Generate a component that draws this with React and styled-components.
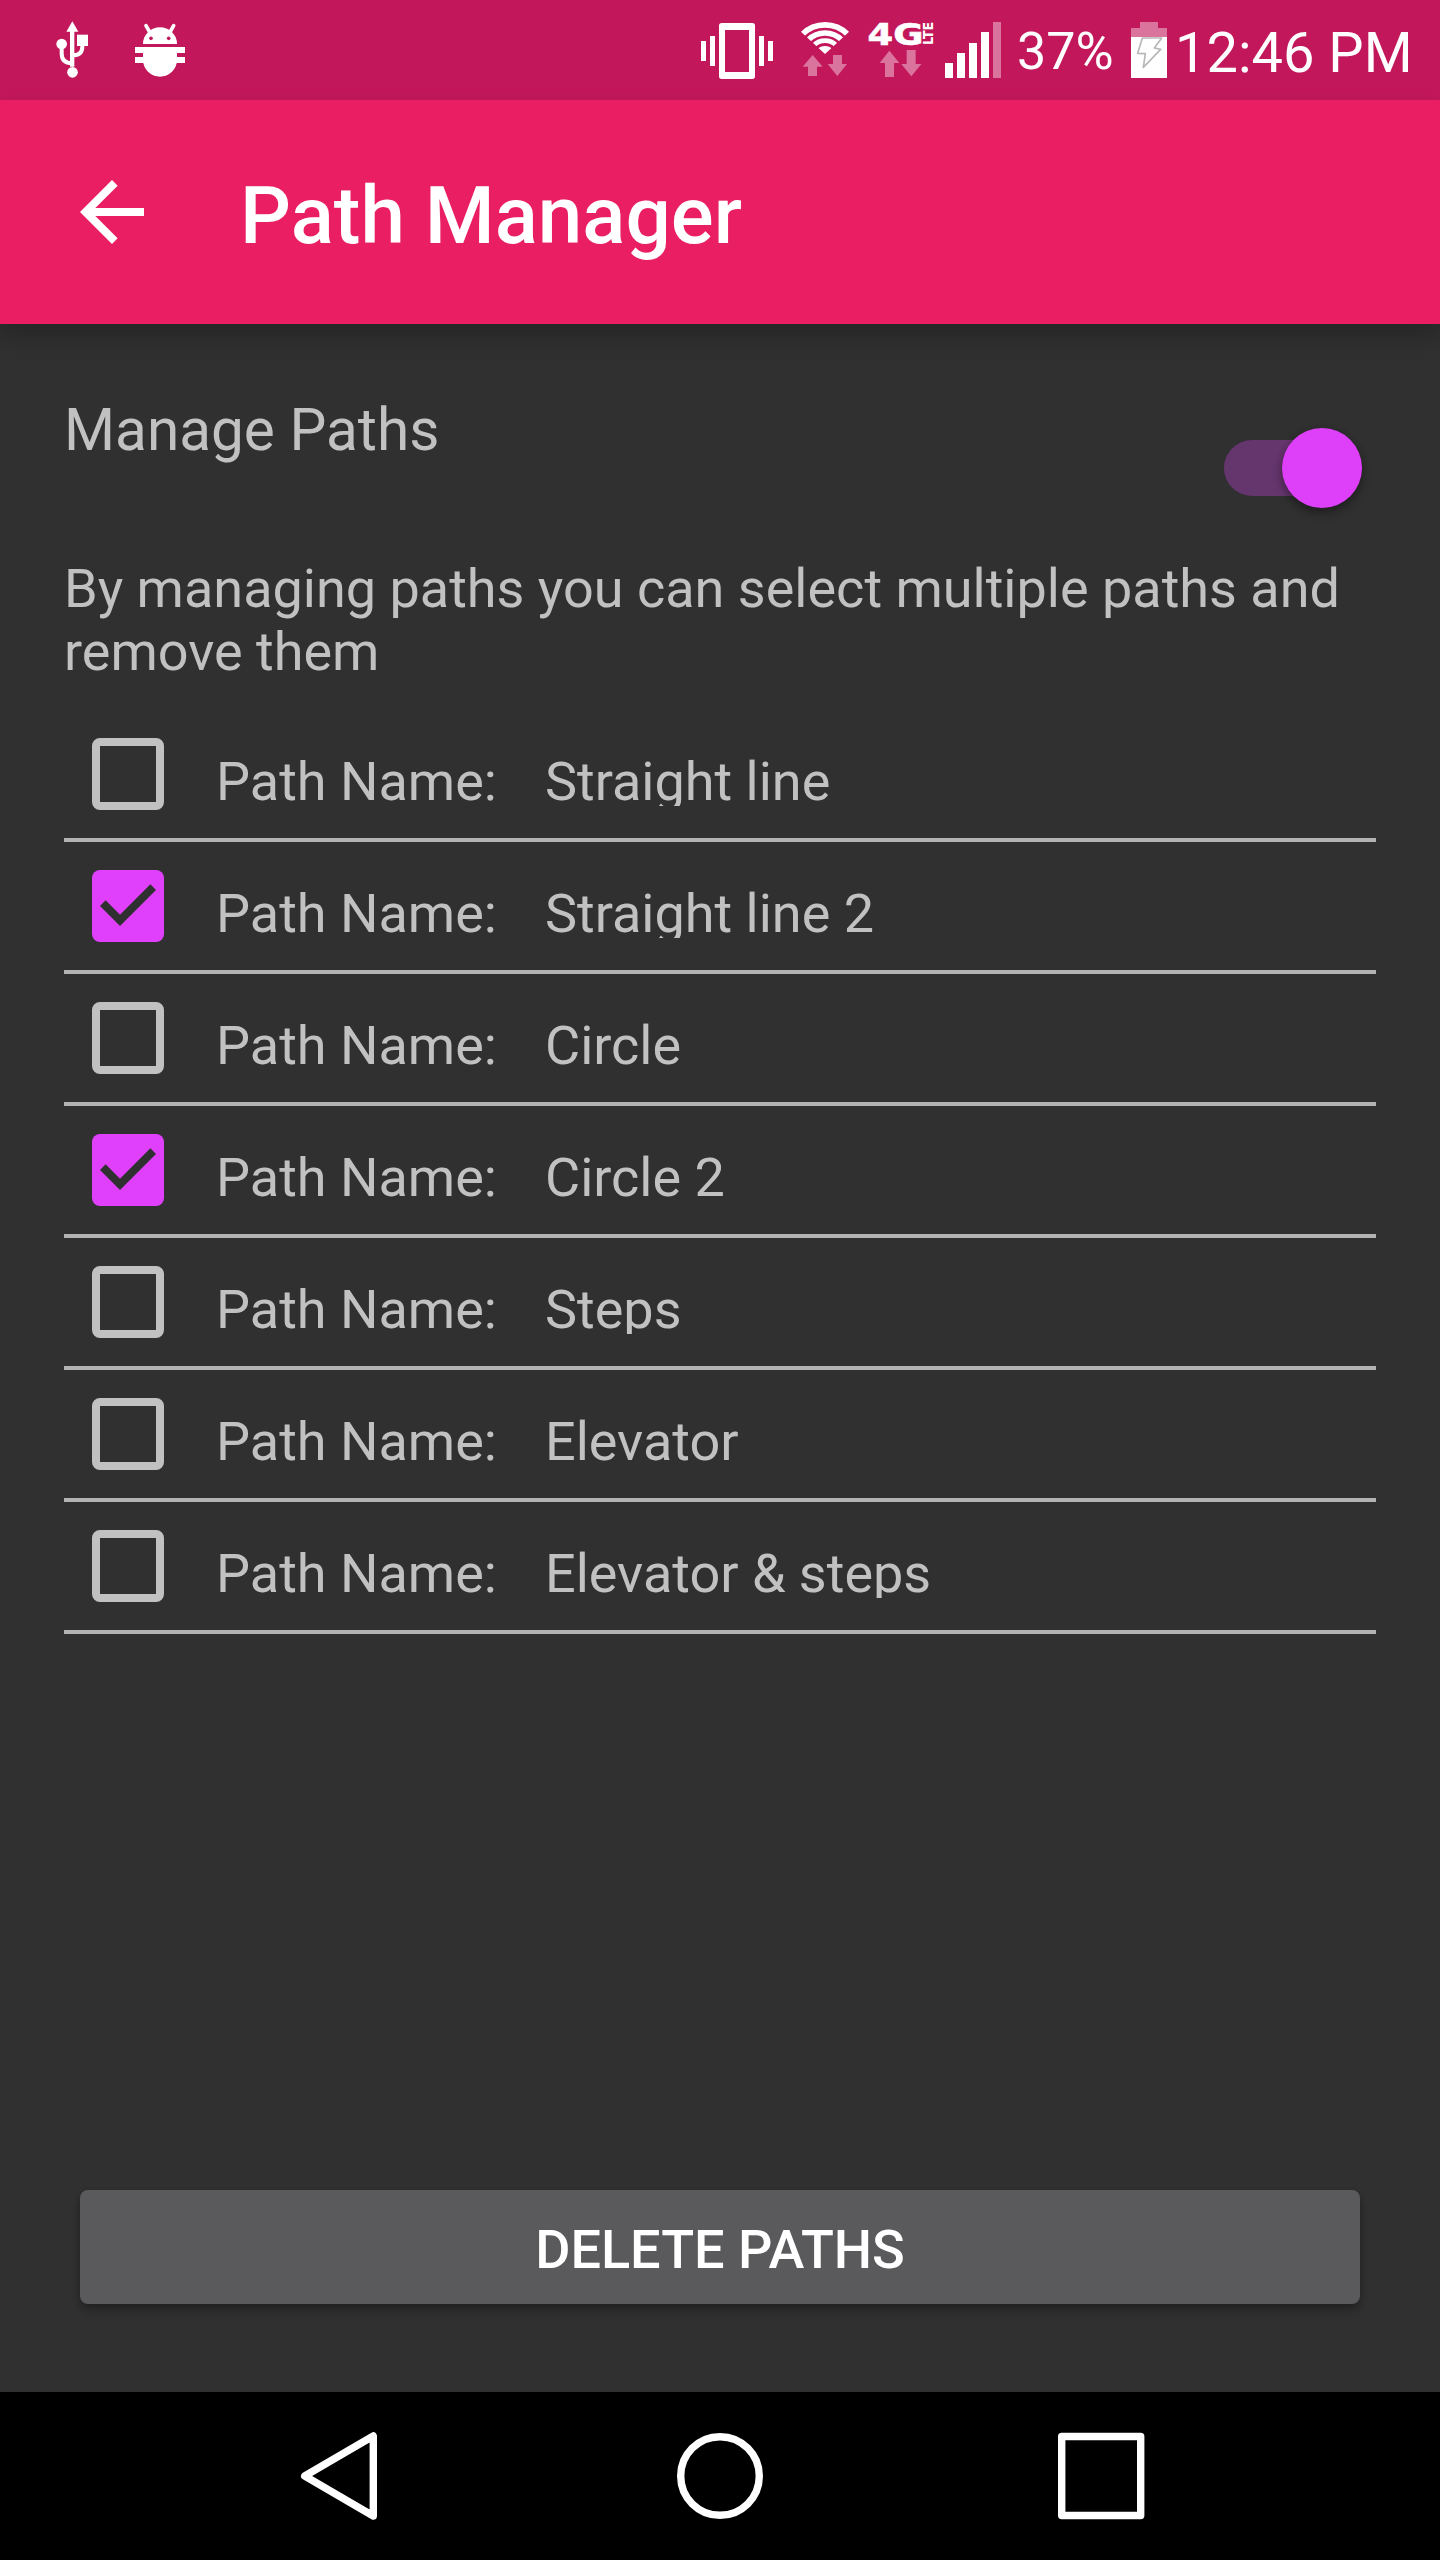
import React, { useState } from 'react';
import styled, { createGlobalStyle } from 'styled-components';

const GlobalStyle = createGlobalStyle`
  * { box-sizing: border-box; }
  body { margin: 0; background: #303030; font-family: Roboto, "Noto Sans", sans-serif; }
`;

const Screen = styled.div`
  display: flex;
  flex-direction: column;
  width: 1440px;
  height: 2560px;
  background: #303030;
  color: #c1c1c1;
  overflow: hidden;
`;

const StatusBar = styled.div`
  display: flex;
  align-items: flex-start;
  height: 100px;
  flex: none;
  background: #c2185b;
  color: #fff;
`;

const Icon = styled.svg`
  display: block;
  flex: none;
  width: ${(p) => p.$w}px;
  height: ${(p) => p.$h}px;
  margin-left: ${(p) => p.$ml || 0}px;
`;

const StatusText = styled.span`
  flex: none;
  white-space: nowrap;
  font-size: ${(p) => p.$size}px;
  line-height: 66px;
  width: ${(p) => p.$width}px;
  margin-left: ${(p) => p.$ml}px;
  padding-top: ${(p) => p.$top}px;
`;

const AppBar = styled.header`
  display: flex;
  align-items: center;
  flex: none;
  height: 224px;
  padding-left: 64px;
  background: #e91e63;
  color: #fff;
  z-index: 1;
  box-shadow: 0 12px 22px rgba(0, 0, 0, 0.22);
`;

const Title = styled.h1`
  margin: 0 0 0 80px;
  font-size: 80px;
  font-weight: 500;
  line-height: 94px;
  padding-top: 8px;
`;

const Content = styled.main`
  display: flex;
  flex-direction: column;
  flex: 1;
  padding: 64px 64px 0;
`;

const ManageRow = styled.div`
  display: flex;
  justify-content: space-between;
  height: 169px;
`;

const ManageLabel = styled.span`
  font-size: 58.5px;
  line-height: 70px;
  padding-top: 7px;
`;

const Track = styled.button`
  display: flex;
  justify-content: flex-end;
  align-items: center;
  width: 138px;
  height: 56px;
  margin: 52px 14px 0 0;
  padding: 0;
  border: 0;
  border-radius: 28px;
  background: #65356d;
`;

const Thumb = styled.span`
  flex: none;
  width: 80px;
  height: 80px;
  border-radius: 50%;
  background: #de3ff9;
  box-shadow: 0 6px 10px rgba(0, 0, 0, 0.3), 0 0 6px rgba(0, 0, 0, 0.15);
`;

const Description = styled.p`
  margin: 0;
  height: 153px;
  font-size: 54px;
  line-height: 63px;
  white-space: nowrap;
`;

const PathList = styled.ul`
  list-style: none;
  margin: 0;
  padding: 0;
`;

const PathRow = styled.li`
  display: flex;
  height: 132px;
  padding-left: 28px;
  border-bottom: 4px solid #b3b3b3;
`;

const Box = styled.button`
  flex: none;
  width: 72px;
  height: 72px;
  margin-top: 28px;
  padding: 0;
  border: ${(p) => (p.$checked ? '0' : '8px solid #c1c1c1')};
  border-radius: 8px;
  background: ${(p) => (p.$checked ? '#e040fb' : 'transparent')};
`;

const Label = styled.span`
  flex: none;
  width: 329px;
  margin: 38px 0 0 52px;
  font-size: 54px;
  line-height: 67px;
`;

const Name = styled.span`
  height: 58px;
  margin-top: 38px;
  font-size: 54px;
  line-height: 67px;
  overflow: hidden;
`;

const DeleteButton = styled.button`
  height: 114px;
  margin: auto 16px 88px;
  padding: 5px 0 0;
  border: 0;
  border-radius: 8px;
  background: #5a5a5c;
  color: #fff;
  font: 500 54px/67px Roboto, "Noto Sans", sans-serif;
  box-shadow: 0 8px 8px rgba(0, 0, 0, 0.16), 0 2px 6px rgba(0, 0, 0, 0.2);
`;

const NavBar = styled.nav`
  display: flex;
  align-items: center;
  flex: none;
  height: 168px;
  padding-left: 296px;
  background: #000;
`;

function UsbIcon() {
  return (
    <Icon $w={36} $h={100} $ml={54} viewBox="162 0 108 300" fill="#fff">
      <path d="M217 64l18 31h-12v105h-13V95h-11z" />
      <circle cx="185" cy="132" r="16" />
      <circle cx="217.500" cy="217" r="16" />
      <path d="M231 104h33v34h-33z" />
      <path d="M185 146v14q0 30 31 30M247 136v4q0 26-30 26" fill="none" stroke="#fff" strokeWidth="12" />
    </Icon>
  );
}

function DebugIcon() {
  return (
    <Icon $w={52} $h={100} $ml={44} viewBox="402 0 156 300" fill="#fff">
      <path d="M438 77l12 21M521 77l-12 21" stroke="#fff" strokeWidth="11" strokeLinecap="round" />
      <path d="M429 132a51 50 0 0 1 102 0z" />
      <circle cx="453" cy="115" r="5.500" fill="#c2185b" />
      <circle cx="506" cy="115" r="5.500" fill="#c2185b" />
      <path d="M405 141h150v18h-24v12h24v18h-25a51 51 0 0 1-100 0h-25v-18h24v-12h-24z" />
    </Icon>
  );
}

function VibrateIcon() {
  return (
    <Icon $w={76} $h={100} $ml={513} viewBox="57 0 228 300" fill="#fff">
      <path fillRule="evenodd" d="M125 69h92q8 0 8 8v152q0 8-8 8h-92q-8 0-8-8V77q0-8 8-8zM135 90v126h72V90z" />
      <path d="M63 123h15v60H63zM90 108h15v90H90zM237 108h15v90h-15zM264 123h15v60h-15z" />
    </Icon>
  );
}

function WifiIcon() {
  return (
    <Icon $w={52} $h={100} $ml={24} viewBox="357 0 156 300" fill="#fff">
      <clipPath id="fan">
        <path d="M435 162L354 87V60h162v27z" />
      </clipPath>
      <g clipPath="url(#fan)" fill="none" stroke="#fff">
        <circle cx="435" cy="170" r="95.500" strokeWidth="17" />
        <circle cx="435" cy="170" r="71" strokeWidth="16" />
        <circle cx="435" cy="170" r="48" strokeWidth="14" />
        <circle cx="435" cy="170" r="16" strokeWidth="32" />
      </g>
      <path
        opacity="0.4"
        d="M398 165l30 35h-17v28h-27v-28h-16zM459 165h27v27h15l-29 36-29-36h16z"
      />
    </Icon>
  );
}

function LteIcon() {
  return (
    <Icon $w={70} $h={100} $ml={16} viewBox="187 0 70 100" fill="#fff">
      <g fontFamily="DejaVu Sans" fontWeight="700">
        <text x="187.500" y="45.200" fontSize="30.500" textLength="56" lengthAdjust="spacingAndGlyphs" stroke="#fff" strokeWidth="0.600">4G</text>
        <text transform="translate(253 45) rotate(-90)" fontSize="13.500" textLength="23" lengthAdjust="spacingAndGlyphs">LTE</text>
      </g>
      <path
        opacity="0.4"
        transform="scale(.33333)"
        d="M628 152l30 37h-16v42h-27v-42h-16zM680 150h27v42h17l-30 37-30-37h16z"
      />
    </Icon>
  );
}

function SignalIcon() {
  return (
    <Icon $w={60} $h={100} $ml={6} viewBox="789 0 180 300" fill="#fff">
      <path d="M795 189h24v45h-24zM831 159h24v75h-24zM867 129h24v105h-24zM903 96h24v138h-24z" />
      <path opacity="0.4" d="M939 66h24v168h-24z" />
    </Icon>
  );
}

function BatteryIcon() {
  return (
    <Icon $w={36} $h={100} viewBox="393 0 108 300" fill="#fff">
      <path opacity="0.4" d="M420 66h54v18h27v27H393V84h27z" />
      <path d="M393 111h108v123H393z" />
      <path
        d="M427 114h58l-22 30 19 4-52 54 6-41-23-1z"
        fill="none"
        stroke="#b8b8b8"
        strokeWidth="5"
        strokeLinejoin="round"
      />
    </Icon>
  );
}

const initialPaths = [
  { name: 'Straight line', checked: false },
  { name: 'Straight line 2', checked: true },
  { name: 'Circle', checked: false },
  { name: 'Circle 2', checked: true },
  { name: 'Steps', checked: false },
  { name: 'Elevator', checked: false },
  { name: 'Elevator & steps', checked: false },
];

export default function App() {
  const [paths, setPaths] = useState(initialPaths);
  const toggle = (index) =>
    setPaths(paths.map((p, i) => (i === index ? { ...p, checked: !p.checked } : p)));

  return (
    <Screen>
      <GlobalStyle />
      <StatusBar>
        <UsbIcon />
        <DebugIcon />
        <VibrateIcon />
        <WifiIcon />
        <LteIcon />
        <SignalIcon />
        <StatusText $size={52} $width={114} $ml={14} $top={19}>37%</StatusText>
        <BatteryIcon />
        <StatusText $size={56} $width={240} $ml={8} $top={20}>12:46 PM</StatusText>
      </StatusBar>
      <AppBar>
        <Icon $w={96} $h={96} viewBox="0 0 24 24" fill="#fff">
          <path d="M20 11H7.830l5.590-5.590L12 4l-8 8 8 8 1.410-1.410L7.830 13H20v-2z" />
        </Icon>
        <Title>Path Manager</Title>
      </AppBar>
      <Content>
        <ManageRow>
          <ManageLabel>Manage Paths</ManageLabel>
          <Track role="switch" aria-checked="true">
            <Thumb />
          </Track>
        </ManageRow>
        <Description>
          By managing paths you can select multiple paths and
          <br />
          remove them
        </Description>
        <PathList>
          {paths.map((path, i) => (
            <PathRow key={path.name}>
              <Box $checked={path.checked} onClick={() => toggle(i)}>
                {path.checked && (
                  <Icon $w={72} $h={72} viewBox="3 3 18 18" fill="#303030">
                    <path d="M10 17l-5-5 1.410-1.410L10 14.170l7.590-7.590L19 8z" />
                  </Icon>
                )}
              </Box>
              <Label>Path Name:</Label>
              <Name>{path.name}</Name>
            </PathRow>
          ))}
        </PathList>
        <DeleteButton>DELETE PATHS</DeleteButton>
      </Content>
      <NavBar>
        <Icon $w={86} $h={168} viewBox="296 2392 86 168" fill="none" stroke="#fff" strokeWidth="7.400" strokeLinejoin="round">
          <path d="M304.700 2476L373.300 2436v80z" />
        </Icon>
        <Icon $w={90} $h={168} $ml={293} viewBox="675 2392 90 168" fill="none" stroke="#fff" strokeWidth="7.400">
          <circle cx="720" cy="2476" r="39.300" />
        </Icon>
        <Icon $w={90} $h={168} $ml={291} viewBox="1056 2392 90 168" fill="none" stroke="#fff" strokeWidth="7.400" strokeLinejoin="round">
          <rect x="1061.700" y="2436.500" width="79" height="79" />
        </Icon>
      </NavBar>
    </Screen>
  );
}
